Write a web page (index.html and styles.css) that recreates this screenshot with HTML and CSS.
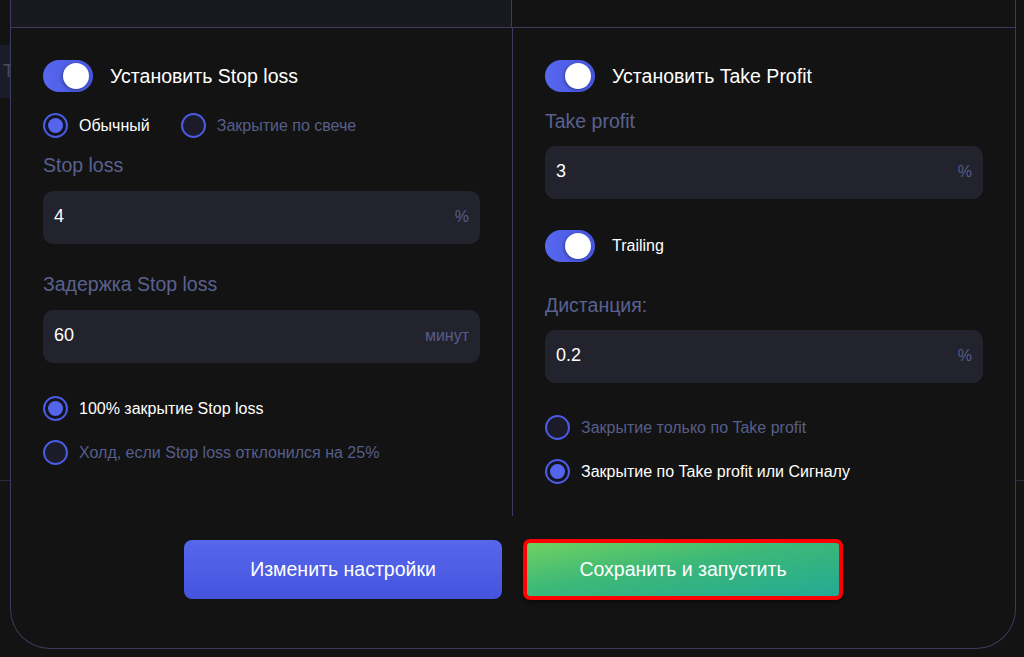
FILE: index.html
```html
<!DOCTYPE html>
<html lang="ru">
<head>
<meta charset="utf-8">
<title>Stop loss / Take profit</title>
<link rel="stylesheet" href="styles.css">
</head>
<body>
<div class="page">
  <div class="page-tab">Т</div>
  <div class="page-line"></div>
</div>

<div class="modal">
  <div class="modal-head">
    <div class="head-cell head-cell--active"></div>
    <div class="head-cell"></div>
  </div>

  <div class="modal-body">
    <section class="col col--left">
      <label class="switch-row">
        <span class="switch"><span class="knob"></span></span>
        <span class="switch-label">Установить Stop loss</span>
      </label>

      <div class="radio-inline">
        <span class="radio-item"><span class="radio radio--on"></span><span class="radio-text radio-text--on">Обычный</span></span>
        <span class="radio-item"><span class="radio"></span><span class="radio-text">Закрытие по свече</span></span>
      </div>

      <div class="field-label fl-1">Stop loss</div>
      <div class="input"><span class="input-value">4</span><span class="input-unit">%</span></div>

      <div class="field-label fl-2">Задержка Stop loss</div>
      <div class="input"><span class="input-value">60</span><span class="input-unit">минут</span></div>

      <div class="radio-row rr-1"><span class="radio radio--on"></span><span class="radio-text radio-text--on">100% закрытие Stop loss</span></div>
      <div class="radio-row rr-2"><span class="radio"></span><span class="radio-text">Холд, если Stop loss отклонился на 25%</span></div>
    </section>

    <section class="col col--right">
      <label class="switch-row">
        <span class="switch"><span class="knob"></span></span>
        <span class="switch-label">Установить Take Profit</span>
      </label>

      <div class="field-label fl-3">Take profit</div>
      <div class="input"><span class="input-value">3</span><span class="input-unit">%</span></div>

      <label class="switch-row trailing">
        <span class="switch"><span class="knob"></span></span>
        <span class="switch-label switch-label--small">Trailing</span>
      </label>

      <div class="field-label fl-4">Дистанция:</div>
      <div class="input"><span class="input-value">0.2</span><span class="input-unit">%</span></div>

      <div class="radio-row rr-3"><span class="radio"></span><span class="radio-text">Закрытие только по Take profit</span></div>
      <div class="radio-row rr-2"><span class="radio radio--on"></span><span class="radio-text radio-text--on">Закрытие по Take profit или Сигналу</span></div>
    </section>
  </div>

  <div class="actions">
    <button class="btn btn--blue">Изменить настройки</button>
    <button class="btn btn--green">Сохранить и запустить</button>
  </div>
</div>
</body>
</html>
```

FILE: styles.css
```css
* { box-sizing: border-box; }

html, body {
  margin: 0;
  padding: 0;
  height: 100%;
}

body {
  background: #131313;
  font-family: "Liberation Sans", Arial, sans-serif;
  color: #ffffff;
  position: relative;
  overflow: hidden;
  width: 1024px;
  height: 657px;
}

/* background page behind the modal */
.page {
  padding-top: 45px;
}
.page-tab {
  width: 200px;
  height: 53px;
  background: #1a1b2b;
  color: #4a4b55;
  font-size: 18px;
  line-height: 53px;
  padding-left: 3px;
}
.page-line {
  margin-top: 382px;
  border-top: 1px solid #2a2b40;
}

/* modal overlay */
.modal {
  position: absolute;
  left: 10px;
  top: 0;
  width: 1006px;
  height: 649px;
  background: #131313;
  border: 1px solid #3b3c5e;
  border-top: none;
  border-radius: 0 0 40px 40px;
  display: flex;
  flex-direction: column;
}

.modal-head {
  display: grid;
  grid-template-columns: 501px 1fr;
  height: 28px;
  border-bottom: 1px solid #3b3c5e;
}
.head-cell--active {
  background: #171820;
  border-right: 1px solid #3b3c5e;
}

.modal-body {
  display: grid;
  grid-template-columns: 502px 1fr;
  height: 488px;
}

.col {
  display: flex;
  flex-direction: column;
  padding: 32px 32px 0 32px;
}
.col--left {
  border-right: 1px solid #3b3c5e;
}

/* switches */
.switch-row {
  display: flex;
  align-items: center;
  height: 32px;
}
.switch {
  width: 50px;
  height: 32px;
  border-radius: 16px;
  background: linear-gradient(90deg, #5767ef 0%, #4555dd 100%);
  position: relative;
  flex: none;
}
.knob {
  position: absolute;
  right: 4px;
  top: 3px;
  width: 26px;
  height: 26px;
  border-radius: 50%;
  background: #ffffff;
  box-shadow: -1px 1px 3px rgba(0, 0, 0, 0.35);
}
.switch-label {
  margin-left: 17px;
  font-size: 19.5px;
  color: #ffffff;
}
.switch-label--small {
  font-size: 16px;
}
.trailing {
  margin-top: 31px;
}

/* radios */
.radio {
  width: 25px;
  height: 25px;
  border-radius: 50%;
  border: 2px solid #4b5be2;
  background: #1c1b2a;
  flex: none;
  position: relative;
}
.radio--on {
  background: #141420;
}
.radio--on::after {
  content: "";
  position: absolute;
  left: 3px;
  top: 3px;
  width: 15px;
  height: 15px;
  border-radius: 50%;
  background: #5465ec;
}
.radio-inline {
  display: flex;
  align-items: center;
  margin-top: 21px;
  height: 25px;
}
.radio-item {
  display: flex;
  align-items: center;
}
.radio-item + .radio-item {
  margin-left: 31px;
}
.radio-row {
  display: flex;
  align-items: center;
  height: 25px;
}
.radio-text {
  margin-left: 11px;
  font-size: 16px;
  color: #575e8a;
}
.radio-text--on {
  color: #ffffff;
}
.rr-1 { margin-top: 33px; }
.rr-2 { margin-top: 19px; }
.rr-3 { margin-top: 32px; }

/* fields */
.field-label {
  font-size: 19.5px;
  line-height: 22px;
  color: #5a6190;
}
.fl-1 { margin-top: 16px; }
.fl-2 { margin-top: 29px; }
.fl-3 { margin-top: 18px; }
.fl-4 { margin-top: 32px; }

.field-label + .input {
  margin-top: 15px;
}
.fl-3 + .input, .fl-4 + .input { margin-top: 14px; }

.input {
  height: 53px;
  background: #23232e;
  border-radius: 10px;
  display: flex;
  align-items: center;
  justify-content: space-between;
  padding: 0 11px 3px 11px;
}
.input-value {
  font-size: 18px;
  color: #ffffff;
}
.input-unit {
  font-size: 16px;
  color: #555c88;
  margin-top: 2px;
}

/* buttons */
.actions {
  display: flex;
  justify-content: center;
  gap: 22px;
  padding-top: 24px;
}
.btn {
  width: 318px;
  height: 59px;
  border: none;
  border-radius: 8px;
  font-family: "Liberation Sans", Arial, sans-serif;
  font-size: 19.5px;
  color: #ffffff;
  cursor: pointer;
}
.btn--blue {
  background: linear-gradient(180deg, #5667ec 0%, #4554dd 100%);
}
.btn--green {
  border-radius: 6px;
  background: linear-gradient(170deg, #73d35e 0%, #3cb878 45%, #22a996 100%);
  outline: 4px solid #ff0000;
  outline-offset: -3px;
  box-shadow: 0 3px 4px rgba(0, 0, 0, 0.5);
}
```
